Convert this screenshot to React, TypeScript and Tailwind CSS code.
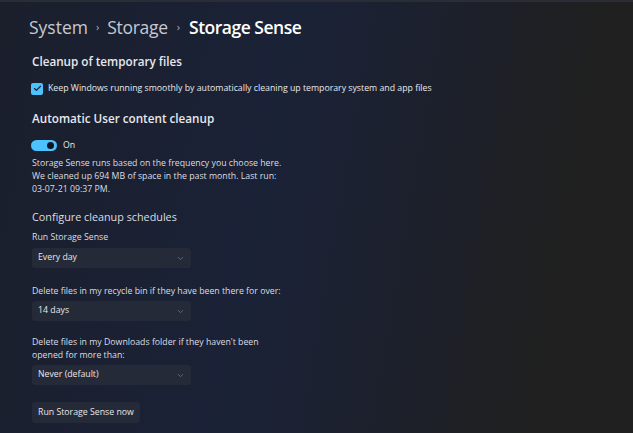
import { Check, ChevronDown } from "lucide-react";

const font = { fontFamily: '"Open Sans", "Noto Sans", sans-serif' };

function Select({ value, className }: { value: string; className: string }) {
    return (
        <div className={`flex h-[20px] w-[159px] items-center justify-between rounded-[3px] bg-[#252a39] pl-[6px] pr-[6px] text-[8.75px] text-[#e6e6ea] ${className}`}>
            <span>{value}</span>
            <ChevronDown size={9} strokeWidth={1.5} className="text-[#8a8e9a]" />
        </div>
    );
}

export default function App() {
    return (
        <div
            style={font}
            className="h-[433px] w-[633px] overflow-hidden border-t-2 border-[#2a2d36] bg-[linear-gradient(100deg,#1b1f2c_0%,#1a2237_42%,#1d202a_68%,#202020_85%)] text-[#e8e8ec]"
        >
            <div className="pl-[29px] pt-[12px]">
                <div className="flex h-[26px] items-center text-[17.5px] leading-[26px]">
                    <span className="text-[#c6c9d1]">System</span>
                    <span className="mx-[8px] text-[11px] text-[#a8abb4]">›</span>
                    <span className="text-[#c6c9d1] tracking-[-0.3px]">Storage</span>
                    <span className="mx-[9px] text-[11px] text-[#a8abb4]">›</span>
                    <span className="font-semibold tracking-[-0.5px] text-white">Storage Sense</span>
                </div>

                <div className="pl-[3px]">
                    <p className="mt-[13px] text-[11.7px] font-semibold leading-[16px]">Cleanup of temporary files</p>

                    <div className="mt-[13px] flex h-[13px] items-center gap-[5px]">
                        <div className="-ml-[1px] flex h-[12px] w-[12px] items-center justify-center rounded-[2px] bg-[#4cc2ff]">
                            <Check size={9} strokeWidth={3} className="text-[#1a2033]" />
                        </div>
                        <span className="text-[8.75px] leading-[13px]">
                            Keep Windows running smoothly by automatically cleaning up temporary system and app files
                        </span>
                    </div>

                    <p className="mt-[15px] text-[11.7px] font-semibold leading-[16px]">Automatic User content cleanup</p>

                    <div className="mt-[13px] flex h-[13px] items-center gap-[6px]">
                        <div className="-ml-[1px] flex h-[11px] w-[26px] items-center justify-end rounded-full bg-[#4cc2ff] pr-[3px]">
                            <div className="h-[7px] w-[7px] rounded-full bg-[#10151f]" />
                        </div>
                        <span className="text-[8.75px] leading-[13px]">On</span>
                    </div>

                    <p className="mt-[5px] text-[8.75px] leading-[13px] text-[#dcdde2]">
                        Storage Sense runs based on the frequency you choose here.
                        <br />
                        We cleaned up 694 MB of space in the past month. Last run:
                        <br />
                        03-07-21 09:37 PM.
                    </p>

                    <p className="mt-[13px] text-[10.8px] leading-[15px] text-[#dcdde2]">Configure cleanup schedules</p>

                    <p className="mt-[7px] text-[8.75px] leading-[13px] text-[#dcdde2]">Run Storage Sense</p>
                    <Select value="Every day" className="mt-[4px]" />

                    <p className="mt-[17px] text-[8.75px] leading-[13px] text-[#dcdde2]">
                        Delete files in my recycle bin if they have been there for over:
                    </p>
                    <Select value="14 days" className="mt-[3px]" />

                    <p className="mt-[15px] text-[8.75px] leading-[13px] text-[#dcdde2]">
                        Delete files in my Downloads folder if they haven't been
                        <br />
                        opened for more than:
                    </p>
                    <Select value="Never (default)" className="mt-[3px]" />

                    <button className="mt-[17px] block h-[21px] rounded-[3px] bg-[#252a39] px-[6px] text-[8.75px] leading-[13px] text-[#e6e6ea]">
                        Run Storage Sense now
                    </button>
                </div>
            </div>
        </div>
    );
}
